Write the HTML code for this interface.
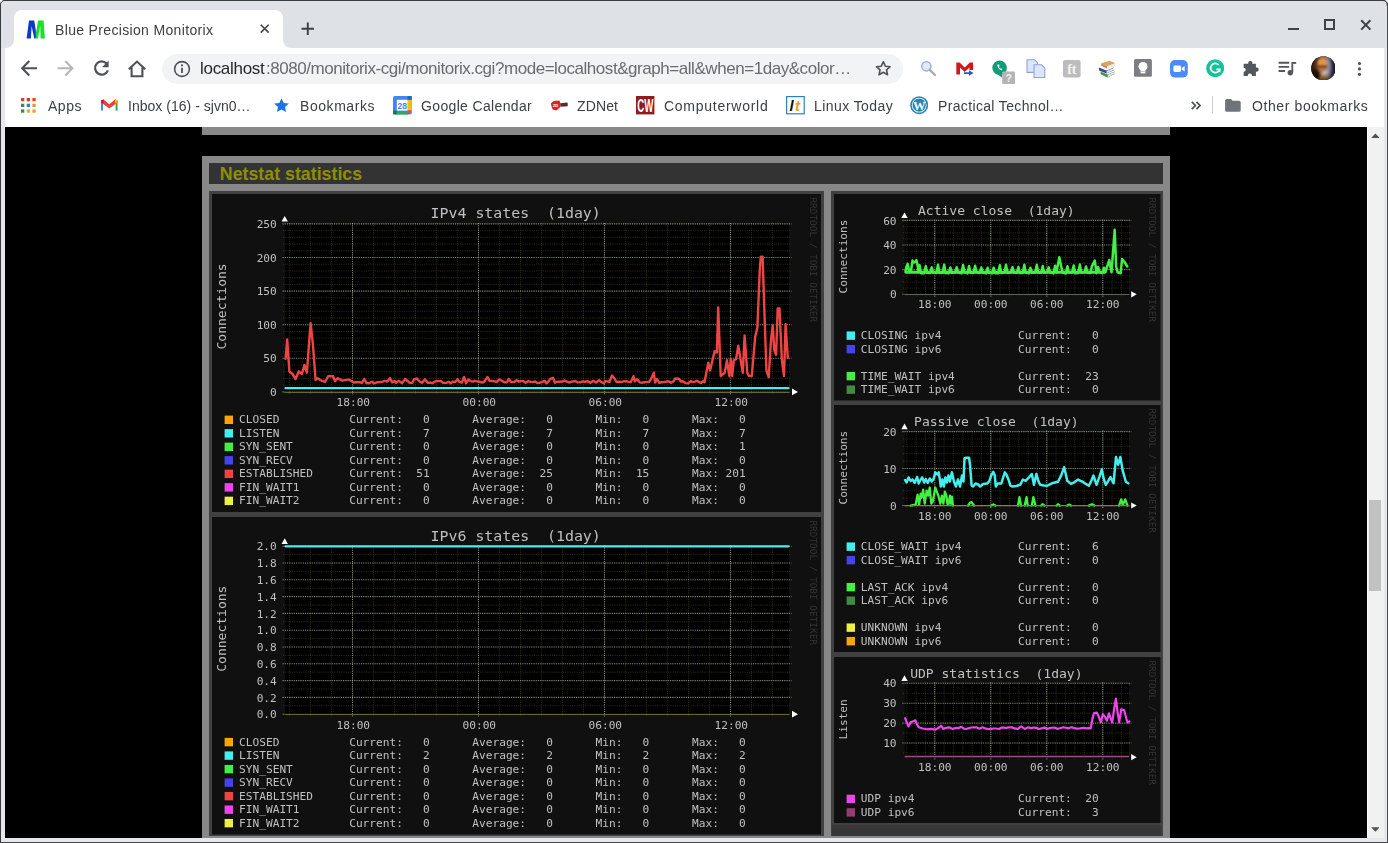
<!DOCTYPE html><html lang="en"><head><meta charset="utf-8"><title>Blue Precision Monitorix</title><style>

html,body{margin:0;padding:0}
body{width:1388px;height:843px;overflow:hidden;position:relative;background:#e7e8ed;font-family:"Liberation Sans","DejaVu Sans",sans-serif}
div,span,svg{position:absolute;box-sizing:border-box}
svg.g{font-family:"DejaVu Sans Mono","Liberation Mono",monospace}
svg.g text{white-space:pre}
svg.g{will-change:transform}
#page{left:4.5px;top:127px;width:1362px;height:711px;background:#000;overflow:hidden}
#pg{left:-4.5px;top:-127px;width:1388px;height:843px}
.gr{background:#888}
.dk{background:#414141}
#ttl{left:219.8px;top:163.5px;height:21px;line-height:21px;font-size:17.8px;font-weight:bold;color:#8e8e08;white-space:nowrap;font-family:"Liberation Sans","DejaVu Sans",sans-serif}


#tabstrip{left:1px;top:1px;width:1385.6px;height:47px;background:#dee1e6}
#toolbar{left:4.5px;top:47.7px;width:1379.5px;height:79.3px;background:#fff}
#tab{left:13.75px;top:10px;width:268.75px;height:38px;background:#fff;border-radius:8px 8px 0 0}
.ct{white-space:pre;line-height:1;transform-origin:0 0;will-change:transform}
#pill{left:162px;top:53.5px;width:741px;height:30.2px;border-radius:15.1px;background:#f1f3f4}
.bt{color:#3c4043;font-size:14px}

</style></head><body>
<div style="left:0;top:0;width:1388px;height:1px;background:#3b3c40"></div>
<div style="left:0;top:0;width:1px;height:843px;background:#3b3c40"></div>
<div style="left:0;top:841.8px;width:1388px;height:1.2px;background:#45464b"></div>
<div style="left:1386.6px;top:0;width:1.4px;height:843px;background:#4a4c52"></div>
<div id="tabstrip"></div>
<div id="toolbar"></div>
<div id="tab"></div>
<svg style="left:5.75px;top:39.7px" width="8" height="8" viewBox="0 0 8 8"><path d="M8 0V8H0A8 8 0 0 0 8 0Z" fill="#fff"/></svg>
<svg style="left:282.5px;top:39.7px" width="8" height="8" viewBox="0 0 8 8"><path d="M0 0V8H8A8 8 0 0 1 0 0Z" fill="#fff"/></svg>
<svg style="left:26px;top:20px" width="19.5" height="19" viewBox="0 0 19.5 19"><defs><linearGradient id="mg" x1="0" x2="1" y1="0" y2="0"><stop offset="0" stop-color="#1535c9"/><stop offset=".45" stop-color="#0a3ad0"/><stop offset=".55" stop-color="#19e02a"/><stop offset="1" stop-color="#19e02a"/></linearGradient></defs><path d="M0.6 18.6L3 0.4H8.2L10.2 12L12 0.4H17.6L18.9 18.6H14.6L14.2 6L11.9 18.6H8.3L5.6 6L4.9 18.6Z" fill="url(#mg)"/></svg>
<span class="ct" style="left:54.5px;top:23.35px;font-size:14px;color:#3c4043;letter-spacing:0.34px;">Blue Precision Monitorix</span>
<svg style="left:259.8px;top:24.2px" width="9.4" height="9.4" viewBox="0 0 10 10"><path d="M.8 .8L9.2 9.2M9.2 .8L.8 9.2" stroke="#45484c" stroke-width="1.7" fill="none"/></svg>
<svg style="left:300.6px;top:21.8px" width="13.6" height="13.6" viewBox="0 0 14 14"><path d="M7 .5V13.5M.5 7H13.5" stroke="#3f4246" stroke-width="2" fill="none"/></svg>
<div style="left:1288px;top:27.6px;width:11.2px;height:2.3px;background:#3f4246"></div>
<div style="left:1324.2px;top:19.4px;width:11.2px;height:10.8px;border:2px solid #3f4246"></div>
<svg style="left:1360px;top:19px" width="12" height="12" viewBox="0 0 12 12"><path d="M1.2 1.2L10.4 10.6M10.4 1.2L1.2 10.6" stroke="#3f4246" stroke-width="2" fill="none"/></svg>
<svg style="left:20px;top:59px" width="19" height="19" viewBox="0 0 19 19"><path d="M17 9.2H2.6M9.3 2L2.2 9.2L9.3 16.4" stroke="#4e5155" stroke-width="2.1" fill="none"/></svg>
<svg style="left:56px;top:59px" width="19" height="19" viewBox="0 0 19 19"><path d="M1.6 9.2H16M9.3 2L16.4 9.2L9.3 16.4" stroke="#b5b6b8" stroke-width="2.1" fill="none"/></svg>
<svg style="left:92px;top:59px" width="19" height="19" viewBox="0 0 19 19"><path d="M14.6 4.6A6.6 6.6 0 1 0 15.9 11.3" stroke="#4e5155" stroke-width="2.2" fill="none"/><path d="M16.6 1.6V8.2H10Z" fill="#4e5155"/></svg>
<svg style="left:127px;top:58.5px" width="20" height="20" viewBox="0 0 20 20"><path d="M1.8 10.3L10 2.6L18.2 10.3M4.6 8.6V17.3H15.4V8.6" stroke="#4e5155" stroke-width="2.1" fill="none"/></svg>
<div id="pill"></div>
<svg style="left:173px;top:59.5px" width="18" height="18" viewBox="0 0 18 18"><circle cx="9" cy="9" r="7.4" stroke="#4e5155" stroke-width="1.6" fill="none"/><path d="M9 7.8V13" stroke="#4e5155" stroke-width="1.8"/><circle cx="9" cy="5.3" r="1.1" fill="#4e5155"/></svg>
<span class="ct" style="left:200px;top:59.81px;font-size:17px;color:#26272a;letter-spacing:-0.29px;">localhost</span>
<span class="ct" style="left:265.6px;top:59.81px;font-size:17px;color:#686c71;letter-spacing:-0.45px;">:8080/monitorix-cgi/monitorix.cgi?mode=localhost&amp;graph=all&amp;when=1day&amp;color…</span>
<svg style="left:875px;top:60.3px" width="16.6" height="16.6" viewBox="0 0 18 18"><path d="M9 1.9L11.2 6.7L16.4 7.3L12.5 10.8L13.6 16L9 13.3L4.4 16L5.5 10.8L1.6 7.3L6.8 6.7Z" stroke="#4e5155" stroke-width="1.75" fill="none" stroke-linejoin="round"/></svg>
<svg style="left:0;top:0" width="6" height="6" viewBox="0 0 6 6"><path d="M0 0H5A5 5 0 0 0 0 5Z" fill="#f4f4f6"/><path d="M.5 6V5A4.5 4.5 0 0 1 5 .5H6" stroke="#3b3c40" stroke-width="1" fill="none"/><path d="M1 6V5.2A4.2 4.2 0 0 1 5.2 1H6V6Z" fill="#dee1e6"/></svg>
<svg style="left:1382px;top:0" width="6" height="6" viewBox="0 0 6 6"><path d="M6 0H1A5 5 0 0 1 6 5Z" fill="#f4f4f6"/><path d="M0 1H.8A4.2 4.2 0 0 1 4.6 5.2V6H0Z" fill="#dee1e6"/><path d="M5.3 6V5A4.5 4.5 0 0 0 1 .5H0" stroke="#3b3c40" stroke-width="1.2" fill="none"/></svg>

<svg style="left:920px;top:60px" width="17" height="17" viewBox="0 0 17 17"><circle cx="6.3" cy="6.3" r="4.6" fill="#dfeafa" stroke="#9fb3d6" stroke-width="1.5"/><path d="M9.8 9.8L15 15" stroke="#a9abb3" stroke-width="2.4" stroke-linecap="round"/></svg>
<svg style="left:955.5px;top:62px" width="18" height="14" viewBox="0 0 18 14"><rect x=".5" y=".8" width="16.4" height="11.6" fill="#fff"/><path d="M.3 12.6V.6H3.6L8.7 5.6L13.8 .6H17.1V8H13.4V5.6L8.7 10L4 5.6V12.6Z" fill="#d2181f"/><path d="M8 10.2H13V8.2L17.5 11L13 13.8V11.9H8Z" fill="#2b59c3"/></svg>
<svg style="left:992px;top:59.5px" width="24" height="24.5" viewBox="0 0 24 24.5"><path d="M7.6 .5A7.3 7.3 0 0 1 14.9 7.8A7.3 7.3 0 0 1 10 14.6V17.6L6.4 15A7.3 7.3 0 0 1 7.6 .5Z" fill="#0f9d78"/><path d="M5.6 4.6C5 7.4 7.3 10.2 10 10.3L10.4 8.9L8.9 8.2L8.2 8.7C7.6 8.2 7.1 7.5 6.9 6.8L7.6 6.3L7.1 4.4Z" fill="#fff"/><rect x="10.2" y="11.6" width="12.8" height="12.4" rx="1.2" fill="#b4b4b4"/><text x="16.6" y="21.8" font-size="10.5" font-weight="bold" fill="#f2f2f2" text-anchor="middle" font-family="Liberation Sans,sans-serif">?</text></svg>
<svg style="left:1025.5px;top:58.5px" width="20" height="19.5" viewBox="0 0 20 19.5"><path d="M1 .8H8.6L11.6 3.8V13.4H1Z" fill="#dbe6fb" stroke="#8fa3d8" stroke-width="1.1"/><path d="M8 5.8H15.6L18.8 9V18.6H8Z" fill="#dbe6fb" stroke="#8fa3d8" stroke-width="1.1"/></svg>
<svg style="left:1062.6px;top:59.6px" width="18" height="18" viewBox="0 0 18 18"><rect x="0" y="0" width="17.6" height="17.4" rx="2" fill="#bcbcbc"/><text x="8.8" y="14.2" font-size="14" font-weight="bold" fill="#f4f4f4" text-anchor="middle" font-family="Liberation Serif,serif">ft</text></svg>
<svg style="left:1098px;top:59.5px" width="19" height="18" viewBox="0 0 19 18"><path d="M3.2 3.2L11.6 .8L17.4 3.2L9.2 6.2Z" fill="#d9a566"/><path d="M3.2 3.2L9.2 6.2V8.8L3.2 5.8Z" fill="#c28f52"/><path d="M9.2 6.2L17.4 3.2V5.6L9.2 8.8Z" fill="#f3ead8"/><path d="M1 7.6L8.4 10.6L15.8 7.4V10.2L8.4 13.6L1 10.4Z" fill="#3c4a8f"/><path d="M8.6 11L16 7.8V9.8L8.6 13.2Z" fill="#e9e9f2"/><path d="M2.6 11.6L9.6 14.6L16.8 11.4V14L9.6 17.4L2.6 14.2Z" fill="#3f9a4e"/><path d="M9.8 15L17 11.8V13.6L9.8 17Z" fill="#eef3ea"/></svg>
<svg style="left:1134.4px;top:59.4px" width="18" height="18" viewBox="0 0 18 18"><rect width="17.9" height="17.8" rx="1.6" fill="#7c7e84"/><circle cx="9" cy="7.4" r="4.5" fill="#fff"/><rect x="6.6" y="11" width="4.8" height="3.4" fill="#fff"/><rect x="6.6" y="12.1" width="4.8" height=".7" fill="#b9bbc0"/></svg>
<svg style="left:1170.2px;top:59.6px" width="18" height="18" viewBox="0 0 18 18"><rect width="17.8" height="17.6" rx="5" fill="#4a8cf7"/><rect x="3.4" y="5.6" width="7.6" height="6.4" rx="1.4" fill="#fff"/><path d="M11.6 8.2L14.6 6V11.6L11.6 9.4Z" fill="#fff"/></svg>
<svg style="left:1206px;top:59px" width="18.4" height="18.4" viewBox="0 0 18.4 18.4"><circle cx="9.2" cy="9.2" r="9" fill="#15c39a"/><path d="M12.6 5.9A4.6 4.6 0 1 0 13.6 10.4H10.4" stroke="#fff" stroke-width="1.7" fill="none"/><path d="M13.7 10.3V13.2" stroke="#fff" stroke-width="1.5"/></svg>
<svg style="left:1240.6px;top:60.6px" width="18.4" height="18.4" viewBox="0 0 18 18"><path d="M6.2 2.6H7.2A2 2 0 1 1 11 2.6H14.6V6.4A2.1 2.1 0 1 1 14.6 10.4V14.8H10.6A2 2 0 1 0 6.8 14.8H2.6V10.6A2 2 0 1 0 2.6 6.6V2.6Z" fill="#53565a"/></svg>
<svg style="left:1277.6px;top:60px" width="19" height="17" viewBox="0 0 19 17"><path d="M.6 2.8H11.2M.6 6.9H11.2M.6 11H7" stroke="#53565a" stroke-width="1.9"/><path d="M14.3 2V12.6" stroke="#53565a" stroke-width="1.8"/><path d="M14.3 2.9H18.2" stroke="#53565a" stroke-width="1.9"/><circle cx="12.3" cy="12.7" r="2.7" fill="#53565a"/></svg>
<svg style="left:1310.7px;top:55.7px" width="24.8" height="24.8" viewBox="0 0 25.2 25.2"><defs><clipPath id="av"><circle cx="12.6" cy="12.6" r="12.3"/></clipPath><linearGradient id="avg" x1="0" x2="1" y1="0" y2="0"><stop offset="0" stop-color="#2a140c"/><stop offset=".28" stop-color="#6b3a1c"/><stop offset=".42" stop-color="#c98840"/><stop offset=".58" stop-color="#b88872"/><stop offset=".7" stop-color="#8e8aa6"/><stop offset=".84" stop-color="#2a3048"/><stop offset="1" stop-color="#10141f"/></linearGradient><radialGradient id="avr" cx=".48" cy=".42" r=".6"><stop offset=".45" stop-color="#000" stop-opacity="0"/><stop offset="1" stop-color="#000" stop-opacity=".6"/></radialGradient><filter id="avb" x="-20%" y="-20%" width="140%" height="140%"><feGaussianBlur stdDeviation=".9"/></filter></defs><g clip-path="url(#av)"><rect width="25.2" height="25.2" fill="#2e1810"/><g filter="url(#avb)"><rect x="-2" y="-2" width="29.2" height="29.2" fill="url(#avg)"/><ellipse cx="11.4" cy="6.8" rx="4.6" ry="4" fill="#de9648"/><ellipse cx="11.8" cy="13.6" rx="4.2" ry="4.6" fill="#b8703e"/><path d="M7.6 10.6H16.6" stroke="#3a1c14" stroke-width="1.6"/><ellipse cx="14.6" cy="18.2" rx="3.4" ry="3.4" fill="#b9b2b6"/><ellipse cx="12.4" cy="24" rx="4.4" ry="3.6" fill="#c98a2a"/><ellipse cx="5" cy="19" rx="4.5" ry="6" fill="#2a120c"/></g><rect width="25.2" height="25.2" fill="url(#avr)"/></g></svg>
<svg style="left:1356.6px;top:61.2px" width="5" height="16" viewBox="0 0 5 16"><circle cx="2.5" cy="2.5" r="1.6" fill="#4e5155"/><circle cx="2.5" cy="7.9" r="1.6" fill="#4e5155"/><circle cx="2.5" cy="13.3" r="1.6" fill="#4e5155"/></svg>

<svg style="left:21px;top:97.6px" width="15" height="15" viewBox="0 0 15 15"><rect x="0" y="0" width="3.3" height="3.3" fill="#dc3b3b"/><rect x="5.7" y="0" width="3.3" height="3.3" fill="#d93a2f"/><rect x="11.4" y="0" width="3.3" height="3.3" fill="#e0471f"/><rect x="0" y="5.7" width="3.3" height="3.3" fill="#2f8f5a"/><rect x="5.7" y="5.7" width="3.3" height="3.3" fill="#2d7fe0"/><rect x="11.4" y="5.7" width="3.3" height="3.3" fill="#f09030"/><rect x="0" y="11.4" width="3.3" height="3.3" fill="#2f8f45"/><rect x="5.7" y="11.4" width="3.3" height="3.3" fill="#e8b020"/><rect x="11.4" y="11.4" width="3.3" height="3.3" fill="#f09a28"/></svg>
<span class="ct" style="left:47.5px;top:98.55px;font-size:14px;color:#3c4043;letter-spacing:0.53px;">Apps</span>
<svg style="left:100.5px;top:99.3px" width="17" height="12" viewBox="0 0 17 12"><path d="M0 11.6V1.4L2 1.4V11.6Z" fill="#4285f4"/><path d="M14.6 11.6V1.4L16.6 1.4V11.6Z" fill="#34a853"/><path d="M0 1.2L2.6 .4L8.3 5.2L14 .4L16.6 1.2V3.6L8.3 9.6L0 3.6Z" fill="#ea4335"/><path d="M0 1.2L2.6.4V4.6L0 3.4Z" fill="#c5221f"/><path d="M16.6 1.2L14 .4V4.6L16.6 3.4Z" fill="#fbbc04"/></svg>
<span class="ct" style="left:127.5px;top:98.55px;font-size:14px;color:#3c4043;letter-spacing:0.02px;">Inbox (16) - sjvn0…</span>
<svg style="left:274px;top:98.4px" width="15" height="14.4" viewBox="0 0 15 14.4"><path d="M7.5 .3L9.7 5L14.8 5.5L11 9L12.1 14.1L7.5 11.4L2.9 14.1L4 9L.2 5.5L5.3 5Z" fill="#1a73e8"/></svg>
<span class="ct" style="left:300px;top:98.55px;font-size:14px;color:#3c4043;letter-spacing:0.56px;">Bookmarks</span>
<svg style="left:392.5px;top:96.2px" width="19" height="18.6" viewBox="0 0 19 18.6"><rect x="0" y="0" width="18.8" height="18.4" rx="2" fill="#4285f4"/><rect x="14.6" y="3.8" width="4.2" height="10.8" fill="#fbbc04"/><rect x="3.8" y="14.6" width="10.8" height="3.8" fill="#34a853"/><rect x="0" y="14.6" width="3.8" height="3.8" fill="#188038"/><path d="M14.6 14.6H18.8L14.6 18.4Z" fill="#ea4335"/><rect x="14.6" y="0" width="4.2" height="3.8" fill="#1967d2"/><rect x="3.8" y="3.8" width="10.8" height="10.8" fill="#fff"/><text x="9.2" y="12.6" font-size="8.6" font-weight="bold" fill="#4285f4" text-anchor="middle" font-family="Liberation Sans,sans-serif">28</text></svg>
<span class="ct" style="left:420.5px;top:98.55px;font-size:14px;color:#3c4043;letter-spacing:0.35px;">Google Calendar</span>
<svg style="left:549.6px;top:100px" width="18.4" height="11" viewBox="0 0 18.4 11"><path d="M.8 3.4L3.6 1L9.4 .6L10.6 3.4L9.8 7.4L6.4 10.4L2.6 9.6L1.6 6.8Z" fill="#d9222a"/><path d="M10.4 3.2L17.6 2.6L17.8 6.2L10.2 6.8Z" fill="#5a2a2a"/><text x="5.6" y="7" font-size="4.2" fill="#fff" text-anchor="middle" font-weight="bold" font-family="Liberation Sans,sans-serif">ZD</text></svg>
<span class="ct" style="left:577px;top:98.55px;font-size:14px;color:#3c4043;letter-spacing:0.14px;">ZDNet</span>
<svg style="left:636.2px;top:96.2px" width="18.6" height="18.6" viewBox="0 0 18.6 18.6"><rect width="18.4" height="18.4" fill="#8f1a1f"/><text transform="translate(9.2 16) scale(.52 1)" font-size="18.6" font-weight="bold" fill="#fff" text-anchor="middle" font-family="Liberation Sans,sans-serif">CW</text></svg>
<span class="ct" style="left:663.75px;top:98.55px;font-size:14px;color:#3c4043;letter-spacing:0.73px;">Computerworld</span>
<svg style="left:786.2px;top:96.2px" width="19" height="18.6" viewBox="0 0 19 18.6"><rect x=".6" y=".6" width="17.6" height="17.2" fill="#fff" stroke="#2f7fc0" stroke-width="1.2"/><text x="3.6" y="14.8" font-size="15" font-weight="bold" font-style="italic" fill="#111" font-family="Liberation Sans,sans-serif">l</text><text x="9" y="14.8" font-size="15" font-weight="bold" font-style="italic" fill="#f0a010" font-family="Liberation Sans,sans-serif">t</text></svg>
<span class="ct" style="left:813.75px;top:98.55px;font-size:14px;color:#3c4043;letter-spacing:0.43px;">Linux Today</span>
<svg style="left:910px;top:96.2px" width="18.4" height="18.4" viewBox="0 0 18.4 18.4"><circle cx="9.2" cy="9.2" r="9" fill="#2585b2"/><circle cx="9.2" cy="9.2" r="7.4" fill="#fff"/><circle cx="9.2" cy="9.2" r="6.6" fill="#2585b2"/><text x="9.2" y="14" font-size="12.6" font-weight="bold" fill="#fff" text-anchor="middle" font-family="Liberation Serif,serif">W</text></svg>
<span class="ct" style="left:937.5px;top:98.55px;font-size:14px;color:#3c4043;letter-spacing:0.35px;">Practical Technol…</span>
<svg style="left:1191px;top:101px" width="10" height="9" viewBox="0 0 10 9"><path d="M.8 .8L4.4 4.5L.8 8.2M5.4 .8L9 4.5L5.4 8.2" stroke="#4e5155" stroke-width="1.7" fill="none"/></svg>
<div style="left:1212px;top:96px;width:1px;height:16.5px;background:#c9cbcf"></div>
<svg style="left:1225.4px;top:99.2px" width="16" height="13" viewBox="0 0 16 13"><path d="M1.6 0H6L7.6 1.7H14.2A1.5 1.5 0 0 1 15.7 3.2V11.2A1.5 1.5 0 0 1 14.2 12.7H1.6A1.5 1.5 0 0 1 .1 11.2V1.5A1.5 1.5 0 0 1 1.6 0Z" fill="#70747a"/></svg>
<span class="ct" style="left:1251.5px;top:98.55px;font-size:14px;color:#3c4043;letter-spacing:0.6px;">Other bookmarks</span>
<div style="left:1366.8px;top:127px;width:17.4px;height:711.3px;background:#f1f1f1;border-left:1px solid #fbfbfb"></div>
<div style="left:1369.2px;top:500.2px;width:12.2px;height:91.3px;background:#c1c1c1"></div>
<svg style="left:1370.7px;top:133px" width="8.8" height="5.4" viewBox="0 0 9.4 6"><path d="M0 5.6L4.7 .6L9.4 5.6Z" fill="#505050"/></svg>
<svg style="left:1370.7px;top:826.8px" width="8.8" height="5.4" viewBox="0 0 9.4 6"><path d="M0 .4L4.7 5.4L9.4 .4Z" fill="#505050"/></svg>
<div id="page"><div id="pg">
<div style="left:202px;top:126.6px;width:967.5px;height:1px;background:#222"></div>
<div class="gr" style="left:202px;top:127.4px;width:967.5px;height:7.7px"></div>
<div class="gr" style="left:202px;top:155.8px;width:967.5px;height:700px"></div>
<div style="left:209px;top:163.2px;width:953.5px;height:20.6px;background:#333"></div>
<div id="ttl">Netstat statistics</div>
<div class="dk" style="left:209px;top:191px;width:614.5px;height:644.6px"></div>
<div class="dk" style="left:830.5px;top:191px;width:332px;height:644.6px"></div>
<div style="left:831.7px;top:824.8px;width:329.6px;height:10.8px;background:#373737"></div>
<svg class="g" style="left:212px;top:194px" width="609" height="318" viewBox="0 0 609 318"><rect x="0" y="0" width="609" height="318" fill="#101010"/><rect x="73" y="29.9" width="504" height="168" fill="#000"/><path d="M71 197.9H579M71 191.18H579M71 184.46H579M71 177.74H579M71 171.02H579M71 164.3H579M71 157.58H579M71 150.86H579M71 144.14H579M71 137.42H579M71 130.7H579M71 123.98H579M71 117.26H579M71 110.54H579M71 103.82H579M71 97.1H579M71 90.38H579M71 83.66H579M71 76.94H579M71 70.22H579M71 63.5H579M71 56.78H579M71 50.06H579M71 43.34H579M71 36.62H579M71 29.9H579" stroke="#787830" stroke-opacity=".36" stroke-width="1" stroke-dasharray="1.12 1.12" fill="none"/><path d="M77.49 28.9V199.9M98.49 28.9V199.9M119.49 28.9V199.9M140.49 28.9V199.9M161.49 28.9V199.9M182.49 28.9V199.9M203.49 28.9V199.9M224.49 28.9V199.9M245.49 28.9V199.9M266.49 28.9V199.9M287.49 28.9V199.9M308.49 28.9V199.9M329.49 28.9V199.9M350.49 28.9V199.9M371.49 28.9V199.9M392.49 28.9V199.9M413.49 28.9V199.9M434.49 28.9V199.9M455.49 28.9V199.9M476.49 28.9V199.9M497.49 28.9V199.9M518.49 28.9V199.9M539.49 28.9V199.9M560.49 28.9V199.9" stroke="#787830" stroke-opacity=".36" stroke-width="1" stroke-dasharray="1.12 1.12" fill="none"/><path d="M70.5 197.9H73M70.5 164.3H579.5M70.5 130.7H579.5M70.5 97.1H579.5M70.5 63.5H579.5M70.5 29.9H579.5" stroke="#b4ccb4" stroke-opacity=".62" stroke-width="1.12" stroke-dasharray="1.12 1.12" fill="none"/><path d="M140.49 28.9V200.9M266.49 28.9V200.9M392.49 28.9V200.9M518.49 28.9V200.9" stroke="#b4ccb4" stroke-opacity=".62" stroke-width="1.12" stroke-dasharray="1.12 1.12" fill="none"/><path d="M73 198.3L577 198.3" stroke="#8d7f3e" stroke-width="1.1" fill="none" stroke-linejoin="round" stroke-linecap="round"/><path d="M73.5 194.2L576.5 194.2" stroke="#44EEEE" stroke-width="2.3" fill="none" stroke-linejoin="round" stroke-linecap="round"/><path d="M73.6 164.8L75.2 145.5L77.4 177.5L80.5 180L83.6 185L86.8 177.3L89.9 180L92.4 171L94.9 178.5L96.8 152.5L98.6 129.2L100.8 149.2L103.6 186L105.5 184.2L109.3 186.6L113 188L116.1 182.3L121.1 182.3L123 187.3L125.5 184.2L130.5 186.6L136.8 185.4L141.8 188.5L144.5 188.22L147.4 188.19L149.87 188.92L152.38 184.94L154.48 189.16L157.08 189.29L160.03 187.7L161.94 189.36L163.72 188.91L165.46 188.19L168.25 188.05L170.6 187.68L172.66 186.81L175.45 187.56L178 184L180.15 188.36L182.35 186.91L184.05 188.85L186.36 186.85L188.16 187.76L190.21 189.17L193.16 185.03L195.18 186.74L197.92 188.94L200.2 188.9L202.07 185.33L205 184.5L207.28 187.31L210.13 188.85L212.94 185.33L215.93 188.85L218.63 188.54L220.43 189.17L222.44 187.84L224.73 186.91L227.18 187.15L229.08 187.04L231.1 188.91L234.03 188.89L236.87 187.83L238.71 189.3L240.72 187.57L243.49 187.85L245.42 185.13L247.41 187.95L249.91 188.67L252 183L254.16 189.24L256.34 185.51L258.51 187.08L261.06 187.6L262.94 186.91L265.83 187.58L267.55 187.75L270.2 188.57L272 187.98L275.5 183L277.6 187.02L280.19 187.06L282.44 187.34L284.88 187.78L287.34 185.42L289.87 186.82L292.52 188.39L294.97 188.25L296.78 185.05L299.26 188.15L301.87 188.11L304.77 186.33L306.86 187.64L308.78 187.05L311.05 187.08L313.62 188.88L316.37 187.02L318.57 187.88L320.44 188.11L323.25 187.55L325.31 188.96L327.36 188.84L329.88 188.12L332.67 186.85L334.47 189.32L336.22 187.56L338.32 184.94L341 183.8L342.98 188.78L344.74 187.76L347.26 187.7L350.2 187.62L352.52 186.54L354.83 187.54L356.89 188.5L359.26 187.8L361.48 187.34L363.29 186.98L365.16 188.22L368.04 188.42L370.88 187.33L373.19 187.71L375.83 187.27L378.46 188.85L381.43 186.86L384.16 188.57L386.97 186.09L389.25 187.97L391.58 189.33L393.36 187.32L395.5 187.35L397.39 188.06L400 181.5L402.52 184.53L404.51 188.03L407.16 187.74L409.96 187.94L412.15 187.2L414.12 187.19L416.5 187.91L418.9 188.09L421.5 182.2L422.86 187.32L425.2 185.2L427.6 188.32L430.5 188.7L432.36 188.27L435.23 188.16L437.18 187.79L439.05 184.97L441.8 178.7L443.12 188.48L444.96 185.1L447.32 188.75L449.71 188.26L451.95 188.02L453.91 187.76L456.3 187.19L459.12 188.8L461.87 187.05L463 184.5L466.98 184.69L468.99 187.51L470.81 187.24L473.54 189.07L476.13 189.35L478.72 187.03L480.57 188.09L482.92 187.62L484.71 186.72L487.13 188.06L489.02 188.92L491.81 186.83L492.5 188.2L496.3 168.6L498.1 176.4L502.6 157.3L504.9 158.4L506.2 113.4L508.7 182L512.7 178.7L515 166.3L517.3 182L518.8 165.2L520.2 182L521.8 166.3L524 165.2L526.3 151.7L528.5 165.2L530.8 178.7L532.6 141.5L535.3 178.7L536.9 182L539.8 182L543.2 142.6L545.4 133.6L547.7 77.3L548.8 62.7L550.6 62.7L552.2 111.1L554.4 176.4L556.7 183.2L558.9 147.2L560.7 131.4L562.3 156.2L564.1 160.7L565.7 114.5L567.5 114.5L569.8 165.2L572 182L573.6 130.3L575.8 164" stroke="#EE4444" stroke-width="2.4" fill="none" stroke-linejoin="round" stroke-linecap="round"/><path d="M69.5 27.6L75.9 27.6L72.7 21.9Z" fill="#fff"/><path d="M580 194.5L580 201.3L586 197.9Z" fill="#fff"/><text x="303.7" y="24.3" font-size="14.88" text-anchor="middle" fill="#c0c0c0">IPv4 states  (1day)</text><text x="64.8" y="202" font-size="11.16" text-anchor="end" fill="#c0c0c0">0</text><text x="64.8" y="168.4" font-size="11.16" text-anchor="end" fill="#c0c0c0">50</text><text x="64.8" y="134.8" font-size="11.16" text-anchor="end" fill="#c0c0c0">100</text><text x="64.8" y="101.2" font-size="11.16" text-anchor="end" fill="#c0c0c0">150</text><text x="64.8" y="67.6" font-size="11.16" text-anchor="end" fill="#c0c0c0">200</text><text x="64.8" y="34" font-size="11.16" text-anchor="end" fill="#c0c0c0">250</text><text x="141.29" y="212.3" font-size="11.16" text-anchor="middle" fill="#c0c0c0">18:00</text><text x="267.29" y="212.3" font-size="11.16" text-anchor="middle" fill="#c0c0c0">00:00</text><text x="393.29" y="212.3" font-size="11.16" text-anchor="middle" fill="#c0c0c0">06:00</text><text x="519.29" y="212.3" font-size="11.16" text-anchor="middle" fill="#c0c0c0">12:00</text><text transform="translate(13.5 112.4) rotate(-90)" font-size="13.02" text-anchor="middle" fill="#c0c0c0">Connections</text><text transform="translate(597.5 3.4) rotate(90)" font-size="9.42" text-anchor="start" fill="#343434">RRDTOOL / TOBI OETIKER</text><rect x="12.6" y="221.6" width="8.4" height="8.4" fill="#FFA500"/><text x="27.1" y="229.2" font-size="11.16" text-anchor="start" fill="#c0c0c0">CLOSED</text><text x="137.2" y="229.2" font-size="11.16" text-anchor="start" fill="#c0c0c0">Current:   0</text><text x="260.3" y="229.2" font-size="11.16" text-anchor="start" fill="#c0c0c0">Average:   0</text><text x="383.6" y="229.2" font-size="11.16" text-anchor="start" fill="#c0c0c0">Min:   0</text><text x="480" y="229.2" font-size="11.16" text-anchor="start" fill="#c0c0c0">Max:   0</text><rect x="12.6" y="235.11" width="8.4" height="8.4" fill="#44EEEE"/><text x="27.1" y="242.71" font-size="11.16" text-anchor="start" fill="#c0c0c0">LISTEN</text><text x="137.2" y="242.71" font-size="11.16" text-anchor="start" fill="#c0c0c0">Current:   7</text><text x="260.3" y="242.71" font-size="11.16" text-anchor="start" fill="#c0c0c0">Average:   7</text><text x="383.6" y="242.71" font-size="11.16" text-anchor="start" fill="#c0c0c0">Min:   7</text><text x="480" y="242.71" font-size="11.16" text-anchor="start" fill="#c0c0c0">Max:   7</text><rect x="12.6" y="248.62" width="8.4" height="8.4" fill="#44EE44"/><text x="27.1" y="256.22" font-size="11.16" text-anchor="start" fill="#c0c0c0">SYN_SENT</text><text x="137.2" y="256.22" font-size="11.16" text-anchor="start" fill="#c0c0c0">Current:   0</text><text x="260.3" y="256.22" font-size="11.16" text-anchor="start" fill="#c0c0c0">Average:   0</text><text x="383.6" y="256.22" font-size="11.16" text-anchor="start" fill="#c0c0c0">Min:   0</text><text x="480" y="256.22" font-size="11.16" text-anchor="start" fill="#c0c0c0">Max:   1</text><rect x="12.6" y="262.13" width="8.4" height="8.4" fill="#4444EE"/><text x="27.1" y="269.73" font-size="11.16" text-anchor="start" fill="#c0c0c0">SYN_RECV</text><text x="137.2" y="269.73" font-size="11.16" text-anchor="start" fill="#c0c0c0">Current:   0</text><text x="260.3" y="269.73" font-size="11.16" text-anchor="start" fill="#c0c0c0">Average:   0</text><text x="383.6" y="269.73" font-size="11.16" text-anchor="start" fill="#c0c0c0">Min:   0</text><text x="480" y="269.73" font-size="11.16" text-anchor="start" fill="#c0c0c0">Max:   0</text><rect x="12.6" y="275.64" width="8.4" height="8.4" fill="#EE4444"/><text x="27.1" y="283.24" font-size="11.16" text-anchor="start" fill="#c0c0c0">ESTABLISHED</text><text x="137.2" y="283.24" font-size="11.16" text-anchor="start" fill="#c0c0c0">Current:  51</text><text x="260.3" y="283.24" font-size="11.16" text-anchor="start" fill="#c0c0c0">Average:  25</text><text x="383.6" y="283.24" font-size="11.16" text-anchor="start" fill="#c0c0c0">Min:  15</text><text x="480" y="283.24" font-size="11.16" text-anchor="start" fill="#c0c0c0">Max: 201</text><rect x="12.6" y="289.15" width="8.4" height="8.4" fill="#EE44EE"/><text x="27.1" y="296.75" font-size="11.16" text-anchor="start" fill="#c0c0c0">FIN_WAIT1</text><text x="137.2" y="296.75" font-size="11.16" text-anchor="start" fill="#c0c0c0">Current:   0</text><text x="260.3" y="296.75" font-size="11.16" text-anchor="start" fill="#c0c0c0">Average:   0</text><text x="383.6" y="296.75" font-size="11.16" text-anchor="start" fill="#c0c0c0">Min:   0</text><text x="480" y="296.75" font-size="11.16" text-anchor="start" fill="#c0c0c0">Max:   0</text><rect x="12.6" y="302.66" width="8.4" height="8.4" fill="#EEEE44"/><text x="27.1" y="310.26" font-size="11.16" text-anchor="start" fill="#c0c0c0">FIN_WAIT2</text><text x="137.2" y="310.26" font-size="11.16" text-anchor="start" fill="#c0c0c0">Current:   0</text><text x="260.3" y="310.26" font-size="11.16" text-anchor="start" fill="#c0c0c0">Average:   0</text><text x="383.6" y="310.26" font-size="11.16" text-anchor="start" fill="#c0c0c0">Min:   0</text><text x="480" y="310.26" font-size="11.16" text-anchor="start" fill="#c0c0c0">Max:   0</text></svg>
<svg class="g" style="left:212px;top:516.5px" width="609" height="317.5" viewBox="0 0 609 317.5"><rect x="0" y="0" width="609" height="317.5" fill="#101010"/><rect x="73" y="29.2" width="504" height="168" fill="#000"/><path d="M71 197.2H579M71 188.8H579M71 180.4H579M71 172H579M71 163.6H579M71 155.2H579M71 146.8H579M71 138.4H579M71 130H579M71 121.6H579M71 113.2H579M71 104.8H579M71 96.4H579M71 88H579M71 79.6H579M71 71.2H579M71 62.8H579M71 54.4H579M71 46H579M71 37.6H579M71 29.2H579" stroke="#787830" stroke-opacity=".36" stroke-width="1" stroke-dasharray="1.12 1.12" fill="none"/><path d="M77.49 28.2V199.2M98.49 28.2V199.2M119.49 28.2V199.2M140.49 28.2V199.2M161.49 28.2V199.2M182.49 28.2V199.2M203.49 28.2V199.2M224.49 28.2V199.2M245.49 28.2V199.2M266.49 28.2V199.2M287.49 28.2V199.2M308.49 28.2V199.2M329.49 28.2V199.2M350.49 28.2V199.2M371.49 28.2V199.2M392.49 28.2V199.2M413.49 28.2V199.2M434.49 28.2V199.2M455.49 28.2V199.2M476.49 28.2V199.2M497.49 28.2V199.2M518.49 28.2V199.2M539.49 28.2V199.2M560.49 28.2V199.2" stroke="#787830" stroke-opacity=".36" stroke-width="1" stroke-dasharray="1.12 1.12" fill="none"/><path d="M70.5 197.2H73M70.5 180.4H579.5M70.5 163.6H579.5M70.5 146.8H579.5M70.5 130H579.5M70.5 113.2H579.5M70.5 96.4H579.5M70.5 79.6H579.5M70.5 62.8H579.5M70.5 46H579.5M70.5 29.2H579.5" stroke="#b4ccb4" stroke-opacity=".62" stroke-width="1.12" stroke-dasharray="1.12 1.12" fill="none"/><path d="M140.49 28.2V200.2M266.49 28.2V200.2M392.49 28.2V200.2M518.49 28.2V200.2" stroke="#b4ccb4" stroke-opacity=".62" stroke-width="1.12" stroke-dasharray="1.12 1.12" fill="none"/><path d="M73 197.4L577 197.4" stroke="#6f6f2c" stroke-width="1" fill="none" stroke-linejoin="round" stroke-linecap="round"/><path d="M73.5 29.3L576.5 29.3" stroke="#44EEEE" stroke-width="2.3" fill="none" stroke-linejoin="round" stroke-linecap="round"/><path d="M69.5 26.9L75.9 26.9L72.7 21.2Z" fill="#fff"/><path d="M580 193.8L580 200.6L586 197.2Z" fill="#fff"/><text x="303.7" y="23.6" font-size="14.88" text-anchor="middle" fill="#c0c0c0">IPv6 states  (1day)</text><text x="64.8" y="201.3" font-size="11.16" text-anchor="end" fill="#c0c0c0">0.0</text><text x="64.8" y="184.5" font-size="11.16" text-anchor="end" fill="#c0c0c0">0.2</text><text x="64.8" y="167.7" font-size="11.16" text-anchor="end" fill="#c0c0c0">0.4</text><text x="64.8" y="150.9" font-size="11.16" text-anchor="end" fill="#c0c0c0">0.6</text><text x="64.8" y="134.1" font-size="11.16" text-anchor="end" fill="#c0c0c0">0.8</text><text x="64.8" y="117.3" font-size="11.16" text-anchor="end" fill="#c0c0c0">1.0</text><text x="64.8" y="100.5" font-size="11.16" text-anchor="end" fill="#c0c0c0">1.2</text><text x="64.8" y="83.7" font-size="11.16" text-anchor="end" fill="#c0c0c0">1.4</text><text x="64.8" y="66.9" font-size="11.16" text-anchor="end" fill="#c0c0c0">1.6</text><text x="64.8" y="50.1" font-size="11.16" text-anchor="end" fill="#c0c0c0">1.8</text><text x="64.8" y="33.3" font-size="11.16" text-anchor="end" fill="#c0c0c0">2.0</text><text x="141.29" y="211.6" font-size="11.16" text-anchor="middle" fill="#c0c0c0">18:00</text><text x="267.29" y="211.6" font-size="11.16" text-anchor="middle" fill="#c0c0c0">00:00</text><text x="393.29" y="211.6" font-size="11.16" text-anchor="middle" fill="#c0c0c0">06:00</text><text x="519.29" y="211.6" font-size="11.16" text-anchor="middle" fill="#c0c0c0">12:00</text><text transform="translate(13.5 111.7) rotate(-90)" font-size="13.02" text-anchor="middle" fill="#c0c0c0">Connections</text><text transform="translate(597.5 3.4) rotate(90)" font-size="9.42" text-anchor="start" fill="#343434">RRDTOOL / TOBI OETIKER</text><rect x="12.6" y="220.9" width="8.4" height="8.4" fill="#FFA500"/><text x="27.1" y="228.5" font-size="11.16" text-anchor="start" fill="#c0c0c0">CLOSED</text><text x="137.2" y="228.5" font-size="11.16" text-anchor="start" fill="#c0c0c0">Current:   0</text><text x="260.3" y="228.5" font-size="11.16" text-anchor="start" fill="#c0c0c0">Average:   0</text><text x="383.6" y="228.5" font-size="11.16" text-anchor="start" fill="#c0c0c0">Min:   0</text><text x="480" y="228.5" font-size="11.16" text-anchor="start" fill="#c0c0c0">Max:   0</text><rect x="12.6" y="234.41" width="8.4" height="8.4" fill="#44EEEE"/><text x="27.1" y="242.01" font-size="11.16" text-anchor="start" fill="#c0c0c0">LISTEN</text><text x="137.2" y="242.01" font-size="11.16" text-anchor="start" fill="#c0c0c0">Current:   2</text><text x="260.3" y="242.01" font-size="11.16" text-anchor="start" fill="#c0c0c0">Average:   2</text><text x="383.6" y="242.01" font-size="11.16" text-anchor="start" fill="#c0c0c0">Min:   2</text><text x="480" y="242.01" font-size="11.16" text-anchor="start" fill="#c0c0c0">Max:   2</text><rect x="12.6" y="247.92" width="8.4" height="8.4" fill="#44EE44"/><text x="27.1" y="255.52" font-size="11.16" text-anchor="start" fill="#c0c0c0">SYN_SENT</text><text x="137.2" y="255.52" font-size="11.16" text-anchor="start" fill="#c0c0c0">Current:   0</text><text x="260.3" y="255.52" font-size="11.16" text-anchor="start" fill="#c0c0c0">Average:   0</text><text x="383.6" y="255.52" font-size="11.16" text-anchor="start" fill="#c0c0c0">Min:   0</text><text x="480" y="255.52" font-size="11.16" text-anchor="start" fill="#c0c0c0">Max:   0</text><rect x="12.6" y="261.43" width="8.4" height="8.4" fill="#4444EE"/><text x="27.1" y="269.03" font-size="11.16" text-anchor="start" fill="#c0c0c0">SYN_RECV</text><text x="137.2" y="269.03" font-size="11.16" text-anchor="start" fill="#c0c0c0">Current:   0</text><text x="260.3" y="269.03" font-size="11.16" text-anchor="start" fill="#c0c0c0">Average:   0</text><text x="383.6" y="269.03" font-size="11.16" text-anchor="start" fill="#c0c0c0">Min:   0</text><text x="480" y="269.03" font-size="11.16" text-anchor="start" fill="#c0c0c0">Max:   0</text><rect x="12.6" y="274.94" width="8.4" height="8.4" fill="#EE4444"/><text x="27.1" y="282.54" font-size="11.16" text-anchor="start" fill="#c0c0c0">ESTABLISHED</text><text x="137.2" y="282.54" font-size="11.16" text-anchor="start" fill="#c0c0c0">Current:   0</text><text x="260.3" y="282.54" font-size="11.16" text-anchor="start" fill="#c0c0c0">Average:   0</text><text x="383.6" y="282.54" font-size="11.16" text-anchor="start" fill="#c0c0c0">Min:   0</text><text x="480" y="282.54" font-size="11.16" text-anchor="start" fill="#c0c0c0">Max:   0</text><rect x="12.6" y="288.45" width="8.4" height="8.4" fill="#EE44EE"/><text x="27.1" y="296.05" font-size="11.16" text-anchor="start" fill="#c0c0c0">FIN_WAIT1</text><text x="137.2" y="296.05" font-size="11.16" text-anchor="start" fill="#c0c0c0">Current:   0</text><text x="260.3" y="296.05" font-size="11.16" text-anchor="start" fill="#c0c0c0">Average:   0</text><text x="383.6" y="296.05" font-size="11.16" text-anchor="start" fill="#c0c0c0">Min:   0</text><text x="480" y="296.05" font-size="11.16" text-anchor="start" fill="#c0c0c0">Max:   0</text><rect x="12.6" y="301.96" width="8.4" height="8.4" fill="#EEEE44"/><text x="27.1" y="309.56" font-size="11.16" text-anchor="start" fill="#c0c0c0">FIN_WAIT2</text><text x="137.2" y="309.56" font-size="11.16" text-anchor="start" fill="#c0c0c0">Current:   0</text><text x="260.3" y="309.56" font-size="11.16" text-anchor="start" fill="#c0c0c0">Average:   0</text><text x="383.6" y="309.56" font-size="11.16" text-anchor="start" fill="#c0c0c0">Min:   0</text><text x="480" y="309.56" font-size="11.16" text-anchor="start" fill="#c0c0c0">Max:   0</text></svg>
<svg class="g" style="left:833.5px;top:194px" width="326.5" height="206.5" viewBox="0 0 326.5 206.5"><rect x="0" y="0" width="326.5" height="206.5" fill="#101010"/><rect x="70.8" y="26.4" width="224" height="73.9" fill="#000"/><path d="M68.8 100.3H296.8M68.8 94.14H296.8M68.8 87.98H296.8M68.8 81.82H296.8M68.8 75.67H296.8M68.8 69.51H296.8M68.8 63.35H296.8M68.8 57.19H296.8M68.8 51.03H296.8M68.8 44.88H296.8M68.8 38.72H296.8M68.8 32.56H296.8M68.8 26.4H296.8" stroke="#787830" stroke-opacity=".36" stroke-width="1" stroke-dasharray="1.12 1.12" fill="none"/><path d="M72.8 25.4V102.3M82.13 25.4V102.3M91.46 25.4V102.3M100.8 25.4V102.3M110.13 25.4V102.3M119.46 25.4V102.3M128.8 25.4V102.3M138.13 25.4V102.3M147.46 25.4V102.3M156.8 25.4V102.3M166.13 25.4V102.3M175.46 25.4V102.3M184.8 25.4V102.3M194.13 25.4V102.3M203.46 25.4V102.3M212.8 25.4V102.3M222.13 25.4V102.3M231.46 25.4V102.3M240.8 25.4V102.3M250.13 25.4V102.3M259.46 25.4V102.3M268.8 25.4V102.3M278.13 25.4V102.3M287.46 25.4V102.3" stroke="#787830" stroke-opacity=".36" stroke-width="1" stroke-dasharray="1.12 1.12" fill="none"/><path d="M68.3 100.3H70.8M68.3 75.67H297.3M68.3 51.03H297.3M68.3 26.4H297.3" stroke="#b4ccb4" stroke-opacity=".62" stroke-width="1.12" stroke-dasharray="1.12 1.12" fill="none"/><path d="M100.8 25.4V103.3M156.8 25.4V103.3M212.8 25.4V103.3M268.8 25.4V103.3" stroke="#b4ccb4" stroke-opacity=".62" stroke-width="1.12" stroke-dasharray="1.12 1.12" fill="none"/><path d="M72 78.2L270.5 78.2" stroke="#44EE44" stroke-width="3" fill="none" stroke-linejoin="round" stroke-linecap="round"/><path d="M71.5 77L72.7 72L73.7 69.8L75.1 77.5L77.1 76L78.5 66.6L79.7 68.5L80.9 68L82.5 66.2L83.7 72L84.5 78L85.62 71.35L87.02 79.29L90.16 79.3L91.76 72.12L93.16 78.76L96.13 79.06L97.73 73.38L99.13 78.58L102.4 79.11L104 70.8L105.4 78.94L108.6 78.66L110.2 70.7L111.6 79.1L114.73 79.16L116.33 73.41L117.73 78.87L121.09 78.77L122.69 73.16L124.09 78.47L127.46 79.35L129.06 70.91L130.46 78L133.47 79.46L135.07 72L136.47 78.74L139.52 78.91L141.12 71.83L142.52 78.33L145.71 79L147.31 73.49L148.71 78.82L152.08 79.33L153.68 73.77L155.08 78.81L158.06 79.33L159.66 73.69L161.06 79.16L164.24 79.16L165.84 71.28L167.24 79.05L170.43 78.64L172.03 70.8L173.43 79.08L176.83 78.41L178.43 73.16L179.83 78.42L182.8 78.65L184.4 73.06L185.8 79.11L188.72 79.04L190.32 70.74L191.72 78.88L194.79 79.36L196.39 73.74L197.79 78.56L201.19 78.67L202.79 70.85L204.19 78.7L207.1 78.54L208.7 71.91L210.1 78.72L213.08 78.35L214.68 73.38L216.08 78.27L219.46 79.38L221.06 71.81L222.46 78.49L225.3 63.2L227.22 72.51L228.62 78.64L231.83 79.43L233.43 72.22L234.83 78.45L238.09 78.59L239.69 71.56L241.09 79.27L244.25 78.96L245.85 70.64L247.25 78.42L250.44 78.32L252.04 72.57L253.44 78.75L256.37 79.05L257.97 72.09L260.8 66.5L262.45 79.15L264.05 72.96L265.45 77.83L268.38 79.11L269.98 73.68L271.38 78.18L275.3 66L276.11 71.62L277.51 78.35L280.7 35.7L282.16 72.51L283.56 78.25L286.65 79.23L288.1 65L290.5 68L293.3 72.5" stroke="#44EE44" stroke-width="2.5" fill="none" stroke-linejoin="round" stroke-linecap="round"/><path d="M70.8 100.5L294.8 100.5" stroke="#566a56" stroke-width="1.1" fill="none" stroke-linejoin="round" stroke-linecap="round"/><path d="M67.3 24.1L73.7 24.1L70.5 18.4Z" fill="#fff"/><path d="M297.2 97.2L297.2 103.4L302.7 100.3Z" fill="#fff"/><text x="162.35" y="21.1" font-size="13.02" text-anchor="middle" fill="#c0c0c0">Active close  (1day)</text><text x="62.6" y="104.4" font-size="11.16" text-anchor="end" fill="#c0c0c0">0</text><text x="62.6" y="79.77" font-size="11.16" text-anchor="end" fill="#c0c0c0">20</text><text x="62.6" y="55.13" font-size="11.16" text-anchor="end" fill="#c0c0c0">40</text><text x="62.6" y="30.5" font-size="11.16" text-anchor="end" fill="#c0c0c0">60</text><text x="100.8" y="114.3" font-size="11.16" text-anchor="middle" fill="#c0c0c0">18:00</text><text x="156.8" y="114.3" font-size="11.16" text-anchor="middle" fill="#c0c0c0">00:00</text><text x="212.8" y="114.3" font-size="11.16" text-anchor="middle" fill="#c0c0c0">06:00</text><text x="268.8" y="114.3" font-size="11.16" text-anchor="middle" fill="#c0c0c0">12:00</text><text transform="translate(13.3 62.45) rotate(-90)" font-size="11.16" text-anchor="middle" fill="#c0c0c0">Connections</text><text transform="translate(315 3.4) rotate(90)" font-size="9.42" text-anchor="start" fill="#343434">RRDTOOL / TOBI OETIKER</text><rect x="12.6" y="137.45" width="8.4" height="8.4" fill="#44EEEE"/><text x="26.8" y="145.05" font-size="11.16" text-anchor="start" fill="#c0c0c0">CLOSING ipv4</text><text x="184.1" y="145.05" font-size="11.16" text-anchor="start" fill="#c0c0c0">Current:   0</text><rect x="12.6" y="150.95" width="8.4" height="8.4" fill="#4444EE"/><text x="26.8" y="158.55" font-size="11.16" text-anchor="start" fill="#c0c0c0">CLOSING ipv6</text><text x="184.1" y="158.55" font-size="11.16" text-anchor="start" fill="#c0c0c0">Current:   0</text><rect x="12.6" y="177.95" width="8.4" height="8.4" fill="#44EE44"/><text x="26.8" y="185.55" font-size="11.16" text-anchor="start" fill="#c0c0c0">TIME_WAIT ipv4</text><text x="184.1" y="185.55" font-size="11.16" text-anchor="start" fill="#c0c0c0">Current:  23</text><rect x="12.6" y="191.45" width="8.4" height="8.4" fill="#448844"/><text x="26.8" y="199.05" font-size="11.16" text-anchor="start" fill="#c0c0c0">TIME_WAIT ipv6</text><text x="184.1" y="199.05" font-size="11.16" text-anchor="start" fill="#c0c0c0">Current:   0</text></svg>
<svg class="g" style="left:833.5px;top:405px" width="326.5" height="247" viewBox="0 0 326.5 247"><rect x="0" y="0" width="326.5" height="247" fill="#101010"/><rect x="70.8" y="26.6" width="224" height="73.9" fill="#000"/><path d="M68.8 100.5H296.8M68.8 93.11H296.8M68.8 85.72H296.8M68.8 78.33H296.8M68.8 70.94H296.8M68.8 63.55H296.8M68.8 56.16H296.8M68.8 48.77H296.8M68.8 41.38H296.8M68.8 33.99H296.8M68.8 26.6H296.8" stroke="#787830" stroke-opacity=".36" stroke-width="1" stroke-dasharray="1.12 1.12" fill="none"/><path d="M72.8 25.6V102.5M82.13 25.6V102.5M91.46 25.6V102.5M100.8 25.6V102.5M110.13 25.6V102.5M119.46 25.6V102.5M128.8 25.6V102.5M138.13 25.6V102.5M147.46 25.6V102.5M156.8 25.6V102.5M166.13 25.6V102.5M175.46 25.6V102.5M184.8 25.6V102.5M194.13 25.6V102.5M203.46 25.6V102.5M212.8 25.6V102.5M222.13 25.6V102.5M231.46 25.6V102.5M240.8 25.6V102.5M250.13 25.6V102.5M259.46 25.6V102.5M268.8 25.6V102.5M278.13 25.6V102.5M287.46 25.6V102.5" stroke="#787830" stroke-opacity=".36" stroke-width="1" stroke-dasharray="1.12 1.12" fill="none"/><path d="M68.3 100.5H70.8M68.3 63.55H297.3M68.3 26.6H297.3" stroke="#b4ccb4" stroke-opacity=".62" stroke-width="1.12" stroke-dasharray="1.12 1.12" fill="none"/><path d="M100.8 25.6V103.5M156.8 25.6V103.5M212.8 25.6V103.5M268.8 25.6V103.5" stroke="#b4ccb4" stroke-opacity=".62" stroke-width="1.12" stroke-dasharray="1.12 1.12" fill="none"/><path d="M76.58 100.6L81.63 99.66L83.64 89.58L85.15 99.66L86.67 88.57L87.68 92.6L89.19 84.54L90.7 98.65L92.72 85.54L94.23 90.59L95.74 82.52L97.26 98.65L98.77 96.64L101.29 82.52L102.8 86.55L104.31 90.59L106.33 98.65L107.84 90.59L109.36 98.65L110.87 86.55L112.38 90.59L113.39 98.65L114.4 99.66L115.91 90.59L116.92 98.65L117.93 91.59L118.94 100.6M134.06 100.6L136.08 97.64L137.59 97.14L140.11 100.6M157.25 100.6L159.27 99.36L161.29 100.6M183.91 100.6L185.45 92.16L186.99 100.6M190.69 100.6L192.55 92.16L193.78 100.6M197.79 100.6L199.33 92.16L201.49 100.6M207.04 100.6L208.59 99.26L210.44 100.6M222.47 100.6L224.01 99.26L225.86 100.6M233.26 100.6L235.11 99.57L236.96 100.6M254.85 100.6L257.94 99.26L260.4 100.6M285.08 100.6L287.24 94.32L288.78 99.87L291.25 94.32L293.41 100.6" stroke="#44EE44" stroke-width="2.3" fill="none" stroke-linejoin="round" stroke-linecap="round"/><path d="M70.8 100.7L294.8 100.7" stroke="#8d7f3e" stroke-width="1.3" fill="none" stroke-linejoin="round" stroke-linecap="round"/><path d="M71.04 74.96L72.55 77.48L74.57 72.44L76.58 75.96L78.6 74.45L80.62 77.98L83.14 71.93L84.65 78.49L86.67 74.45L88.18 72.44L90.2 77.48L91.71 73.95L93.73 77.98L95.74 73.44L97.76 76.47L99.78 73.44L101.29 67.39L103.31 69.41L104.82 67.39L106.83 81.51L108.35 74.45L109.86 81.51L111.37 72.44L112.88 77.48L114.4 70.42L115.91 76.47L117.93 67.39L119.94 76.47L121.96 81.51L123.98 74.45L125.99 81.51L128.01 70.42L129.52 76.47L130.53 53.28L132.04 52.77L135.07 52.77L136.08 60.33L137.59 80.5L139.1 81.51L141.62 78.49L144.14 79.49L146.16 81.51L149.19 78.99L153.22 78.49L155.24 76.47L157.25 70.42L159.27 66.89L160.78 70.42L161.79 81.51L163.81 78.49L167.34 78.49L168.85 73.44L170.87 67.39L172.38 69.41L174.4 74.45L176.41 80.5L178.43 81.51L182.46 81.01L186.5 79.49L188.84 74.58L191.62 75.81L194.7 72.73L197.79 69.03L199.95 79.82L202.42 69.03L204.27 75.81L206.12 79.82L209.82 80.44L213.21 80.75L217.84 78.28L224.01 76.74L227.09 70.57L230.18 62.24L233.26 75.81L236.96 78.9L240.66 77.05L244.06 74.58L246.52 75.81L248.68 76.74L251.77 78.9L254.85 80.75L257.32 75.81L259.48 70.57L262.56 79.82L265.34 72.11L267.81 64.4L269.66 73.66L271.82 79.82L274.29 75.81L276.44 72.11L279.53 78.28L282 52.06L284.16 59.77L286.31 52.06L288.78 65.94L291.87 76.74L294.33 78.28" stroke="#44EEEE" stroke-width="2.5" fill="none" stroke-linejoin="round" stroke-linecap="round"/><path d="M67.3 24.3L73.7 24.3L70.5 18.6Z" fill="#fff"/><path d="M297.2 97.4L297.2 103.6L302.7 100.5Z" fill="#fff"/><text x="162.35" y="21.3" font-size="13.02" text-anchor="middle" fill="#c0c0c0">Passive close  (1day)</text><text x="62.6" y="104.6" font-size="11.16" text-anchor="end" fill="#c0c0c0">0</text><text x="62.6" y="67.65" font-size="11.16" text-anchor="end" fill="#c0c0c0">10</text><text x="62.6" y="30.7" font-size="11.16" text-anchor="end" fill="#c0c0c0">20</text><text x="100.8" y="114.5" font-size="11.16" text-anchor="middle" fill="#c0c0c0">18:00</text><text x="156.8" y="114.5" font-size="11.16" text-anchor="middle" fill="#c0c0c0">00:00</text><text x="212.8" y="114.5" font-size="11.16" text-anchor="middle" fill="#c0c0c0">06:00</text><text x="268.8" y="114.5" font-size="11.16" text-anchor="middle" fill="#c0c0c0">12:00</text><text transform="translate(13.3 62.65) rotate(-90)" font-size="11.16" text-anchor="middle" fill="#c0c0c0">Connections</text><text transform="translate(315 3.4) rotate(90)" font-size="9.42" text-anchor="start" fill="#343434">RRDTOOL / TOBI OETIKER</text><rect x="12.6" y="137.45" width="8.4" height="8.4" fill="#44EEEE"/><text x="26.8" y="145.05" font-size="11.16" text-anchor="start" fill="#c0c0c0">CLOSE_WAIT ipv4</text><text x="184.1" y="145.05" font-size="11.16" text-anchor="start" fill="#c0c0c0">Current:   6</text><rect x="12.6" y="150.95" width="8.4" height="8.4" fill="#4444EE"/><text x="26.8" y="158.55" font-size="11.16" text-anchor="start" fill="#c0c0c0">CLOSE_WAIT ipv6</text><text x="184.1" y="158.55" font-size="11.16" text-anchor="start" fill="#c0c0c0">Current:   0</text><rect x="12.6" y="177.95" width="8.4" height="8.4" fill="#44EE44"/><text x="26.8" y="185.55" font-size="11.16" text-anchor="start" fill="#c0c0c0">LAST_ACK ipv4</text><text x="184.1" y="185.55" font-size="11.16" text-anchor="start" fill="#c0c0c0">Current:   0</text><rect x="12.6" y="191.45" width="8.4" height="8.4" fill="#448844"/><text x="26.8" y="199.05" font-size="11.16" text-anchor="start" fill="#c0c0c0">LAST_ACK ipv6</text><text x="184.1" y="199.05" font-size="11.16" text-anchor="start" fill="#c0c0c0">Current:   0</text><rect x="12.6" y="218.45" width="8.4" height="8.4" fill="#EEEE44"/><text x="26.8" y="226.05" font-size="11.16" text-anchor="start" fill="#c0c0c0">UNKNOWN ipv4</text><text x="184.1" y="226.05" font-size="11.16" text-anchor="start" fill="#c0c0c0">Current:   0</text><rect x="12.6" y="231.95" width="8.4" height="8.4" fill="#FFA500"/><text x="26.8" y="239.55" font-size="11.16" text-anchor="start" fill="#c0c0c0">UNKNOWN ipv6</text><text x="184.1" y="239.55" font-size="11.16" text-anchor="start" fill="#c0c0c0">Current:   0</text></svg>
<svg class="g" style="left:833.5px;top:656.5px" width="326.5" height="166" viewBox="0 0 326.5 166"><rect x="0" y="0" width="326.5" height="166" fill="#101010"/><rect x="70.8" y="26.3" width="224" height="73.9" fill="#000"/><path d="M68.8 96.02H296.8M68.8 86.06H296.8M68.8 76.1H296.8M68.8 66.14H296.8M68.8 56.18H296.8M68.8 46.22H296.8M68.8 36.26H296.8M68.8 26.3H296.8" stroke="#787830" stroke-opacity=".36" stroke-width="1" stroke-dasharray="1.12 1.12" fill="none"/><path d="M72.8 25.3V102.2M82.13 25.3V102.2M91.46 25.3V102.2M100.8 25.3V102.2M110.13 25.3V102.2M119.46 25.3V102.2M128.8 25.3V102.2M138.13 25.3V102.2M147.46 25.3V102.2M156.8 25.3V102.2M166.13 25.3V102.2M175.46 25.3V102.2M184.8 25.3V102.2M194.13 25.3V102.2M203.46 25.3V102.2M212.8 25.3V102.2M222.13 25.3V102.2M231.46 25.3V102.2M240.8 25.3V102.2M250.13 25.3V102.2M259.46 25.3V102.2M268.8 25.3V102.2M278.13 25.3V102.2M287.46 25.3V102.2" stroke="#787830" stroke-opacity=".36" stroke-width="1" stroke-dasharray="1.12 1.12" fill="none"/><path d="M68.3 86.06H297.3M68.3 66.14H297.3M68.3 46.22H297.3M68.3 26.3H297.3" stroke="#b4ccb4" stroke-opacity=".62" stroke-width="1.12" stroke-dasharray="1.12 1.12" fill="none"/><path d="M100.8 25.3V103.2M156.8 25.3V103.2M212.8 25.3V103.2M268.8 25.3V103.2" stroke="#b4ccb4" stroke-opacity=".62" stroke-width="1.12" stroke-dasharray="1.12 1.12" fill="none"/><path d="M71.3 99.5L294.3 99.5" stroke="#9c4c86" stroke-width="1.7" fill="none" stroke-linejoin="round" stroke-linecap="round"/><path d="M71.2 61.24L72.83 65.33L74.47 69.42L76.52 65.33L78.56 64.51L81.43 63.29L83.06 67.38L84.7 70.24L88.79 71.47L92.88 72.29L96.97 71.88L101.07 72.7L104.34 71.06L107.2 68.61L109.25 71.88L111.7 70.94L115.05 70.35L118.61 72.03L122.2 70.89L124.43 71.22L127.36 69.8L129.76 71.57L133.06 71.79L135.34 70.95L137.39 70.48L139.78 70.28L142.3 70.31L145.46 71.71L148.63 70.3L151.17 71.42L153.45 71.96L156.49 72.08L159.09 71.51L161.92 71.5L165.12 71.98L167.2 70.7L169.28 70.63L172.27 70.84L174.61 70.33L177.89 70.37L180.5 71.43L183.82 71.89L187.17 69.27L190.76 71.92L193.81 70.39L197.37 71.08L199.93 70.53L202.22 70.82L204.53 71.99L207.45 71.34L210.47 70.56L213.2 71.98L215.3 71.18L217.56 70.74L220.64 70.63L223.4 71.81L225.92 71.25L229.37 70.29L232.21 70.74L234.73 71.34L237.4 70.26L240.47 71.16L242.66 71.58L246.12 71.42L249.44 70.81L252.73 71.42L255.23 71.19L256.55 71.47L258.59 61.24L259.82 56.33L262.69 55.51L264.73 59.6L266.78 65.33L268.82 57.15L270.87 59.6L272.92 63.7L274.96 56.33L276.6 61.24L278.23 65.33L280.28 51.01L281.92 41.6L283.55 55.1L285.19 65.33L287.24 52.24L290.1 53.06L291.74 59.2L293.37 65.33L295.42 64.51" stroke="#EE44EE" stroke-width="2.2" fill="none" stroke-linejoin="round" stroke-linecap="round"/><path d="M67.3 24L73.7 24L70.5 18.3Z" fill="#fff"/><path d="M297.2 97.1L297.2 103.3L302.7 100.2Z" fill="#fff"/><text x="162.35" y="21" font-size="13.02" text-anchor="middle" fill="#c0c0c0">UDP statistics  (1day)</text><text x="62.6" y="90.16" font-size="11.16" text-anchor="end" fill="#c0c0c0">10</text><text x="62.6" y="70.24" font-size="11.16" text-anchor="end" fill="#c0c0c0">20</text><text x="62.6" y="50.32" font-size="11.16" text-anchor="end" fill="#c0c0c0">30</text><text x="62.6" y="30.4" font-size="11.16" text-anchor="end" fill="#c0c0c0">40</text><text x="100.8" y="114.2" font-size="11.16" text-anchor="middle" fill="#c0c0c0">18:00</text><text x="156.8" y="114.2" font-size="11.16" text-anchor="middle" fill="#c0c0c0">00:00</text><text x="212.8" y="114.2" font-size="11.16" text-anchor="middle" fill="#c0c0c0">06:00</text><text x="268.8" y="114.2" font-size="11.16" text-anchor="middle" fill="#c0c0c0">12:00</text><text transform="translate(13.3 62.35) rotate(-90)" font-size="11.16" text-anchor="middle" fill="#c0c0c0">Listen</text><text transform="translate(315 3.4) rotate(90)" font-size="9.42" text-anchor="start" fill="#343434">RRDTOOL / TOBI OETIKER</text><rect x="12.6" y="137.7" width="8.4" height="8.4" fill="#EE44EE"/><text x="26.8" y="145.3" font-size="11.16" text-anchor="start" fill="#c0c0c0">UDP ipv4</text><text x="184.1" y="145.3" font-size="11.16" text-anchor="start" fill="#c0c0c0">Current:  20</text><rect x="12.6" y="151.2" width="8.4" height="8.4" fill="#963C74"/><text x="26.8" y="158.8" font-size="11.16" text-anchor="start" fill="#c0c0c0">UDP ipv6</text><text x="184.1" y="158.8" font-size="11.16" text-anchor="start" fill="#c0c0c0">Current:   3</text></svg>
</div></div>
</body></html>
